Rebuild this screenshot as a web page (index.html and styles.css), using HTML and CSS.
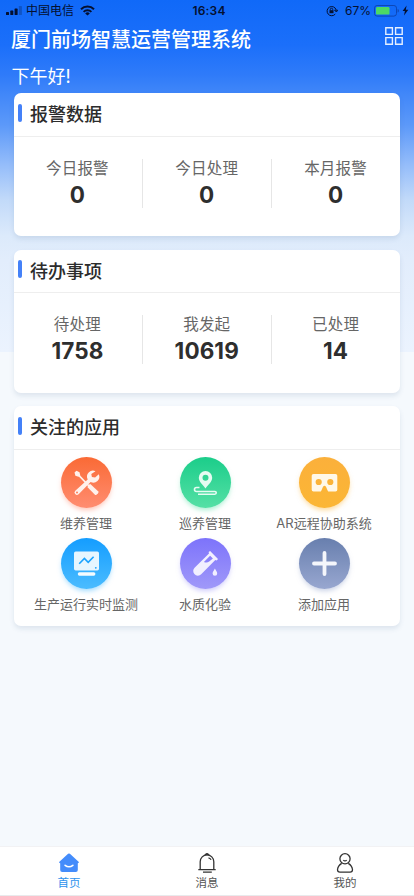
FILE: index.html
```html
<!DOCTYPE html>
<html lang="zh-CN">
<head>
<meta charset="utf-8">
<meta name="viewport" content="width=device-width, initial-scale=1">
<title>厦门前场智慧运营管理系统</title>
<link rel="stylesheet" href="styles.css">
</head>
<body>
<div class="status">
  <div class="status-left">
    <svg class="signal" width="16" height="10" viewBox="0 0 16 10"><rect x="0" y="6" width="3" height="3" rx=".6"/><rect x="4.3" y="4.6" width="3" height="4.4" rx=".6"/><rect x="8.6" y="2.6" width="3" height="6.4" rx=".6"/><rect x="12.9" y="0" width="3" height="9" rx=".6" opacity=".25"/></svg>
    <span class="carrier">中国电信</span>
    <svg width="15" height="11" viewBox="0 0 15 11" fill="none" stroke="#041030"><path d="M1 4.2a9.2 9.2 0 0 1 13 0" stroke-width="2"/><path d="M3.6 6.9a5.5 5.5 0 0 1 7.8 0" stroke-width="1.9"/><path d="M7.5 10.6 5.2 8.4a3.3 3.3 0 0 1 4.6 0z" fill="#041030" stroke="none"/></svg>
  </div>
  <span class="time">16:34</span>
  <div class="status-right">
    <svg width="12" height="12" viewBox="0 0 12 12" fill="none" stroke="#041030"><path d="M9.3 9a4.6 4.6 0 1 1 .8-4.2M8.6 5.2h3L10.4 7z" stroke-width="1"/><rect x="3.5" y="5.2" width="4" height="3" fill="#041030" stroke="none"/><path d="M4.3 5.2V4.4a1.2 1.2 0 0 1 2.4 0v.8" stroke-width=".9"/></svg>
    <span class="percent">67%</span>
    <svg width="25" height="12" viewBox="0 0 25 12"><rect x=".5" y=".5" width="22" height="10.6" rx="2.6" fill="none" stroke="#0d47b5"/><rect x="2" y="2" width="13.5" height="7.6" rx="1.2" fill="#4cd964"/><path d="M23.6 4q1.3.3 1.3 1.8t-1.3 1.8z" fill="#0d47b5"/></svg>
    <svg class="bolt" width="7" height="11" viewBox="0 0 7 11"><path d="M4.6.4.6 6h2.3L2 10.6 6.3 4.7H3.8z"/></svg>
  </div>
</div>
<header class="header">
  <h1>厦门前场智慧运营管理系统</h1>
  <svg width="18" height="18" viewBox="0 0 18 18" fill="none" stroke="#e4efff" stroke-width="1.4"><path d="M.8.8h6.6v6.6H.8zM10.6.8h6.6v6.6h-6.6zM.8 10.6h6.6v6.6H.8zM10.6 10.6h6.6v6.6h-6.6z"/></svg>
</header>
<p class="greeting">下午好!</p>
<main>
  <section class="card">
    <h2>报警数据</h2>
    <div class="stats">
      <div class="stat"><span>今日报警</span><b>0</b></div>
      <div class="stat"><span>今日处理</span><b>0</b></div>
      <div class="stat"><span>本月报警</span><b>0</b></div>
    </div>
  </section>
  <section class="card">
    <h2>待办事项</h2>
    <div class="stats">
      <div class="stat"><span>待处理</span><b>1758</b></div>
      <div class="stat"><span>我发起</span><b>10619</b></div>
      <div class="stat"><span>已处理</span><b>14</b></div>
    </div>
  </section>
  <section class="card card-apps">
    <h2>关注的应用</h2>
    <div class="apps">
      <div class="app">
        <div class="icon orange"><svg viewBox="0 0 51 51"><path d="M17.5 18 28 29" stroke="#fff1ec" stroke-width="1.8"/><path d="m13.5 15.5 2-1.7 3 1.4.8 3.4-1.8 1.2-3.1-1z" fill="#fff1ec"/><path d="m29 26.8 8.1 7.4q1 1-.1 2.1l-1.3 1.3q-1 1-2 0l-7.4-7.6z" fill="#fff1ec"/><path d="M34.5 14.2a6 6 0 0 0-7.8 8.2L14.3 33.7a2.4 2.4 0 0 0 3.3 3.5l12-12.1a6 6 0 0 0 8.2-7.8l-3.7 3.2-3.2-.6-.6-2.8z" fill="#fff1ec"/><circle cx="16" cy="35.5" r="1" fill="#ff7e58"/></svg></div>
        <span>维养管理</span>
      </div>
      <div class="app">
        <div class="icon green"><svg viewBox="0 0 51 51"><path fill-rule="evenodd" d="M25.5 14a6.7 6.7 0 0 0-6.7 6.7c0 4.4 4.7 7.3 6.7 10.7 2-3.4 6.7-6.3 6.7-10.7a6.7 6.7 0 0 0-6.7-6.7zm0 3.8a3 3 0 1 1 0 6 3 3 0 0 1 0-6z" fill="#e6fbf2"/><path d="M19.5 30.5h-3a2 2 0 0 0 0 4h18.4a1 1 0 0 1 0 2.7H18" fill="none" stroke="#e6fbf2" stroke-width="1.6"/></svg></div>
        <span>巡养管理</span>
      </div>
      <div class="app">
        <div class="icon yellow"><svg viewBox="0 0 51 51"><path fill-rule="evenodd" d="M14.5 17h22q1.8 0 1.8 1.8v14q0 1.8-1.8 1.8h-6.4q-1 0-1.5-1.2l-1.6-3.7q-1.5-2-3 0l-1.6 3.7q-.5 1.2-1.5 1.2h-6.4q-1.8 0-1.8-1.8v-14q0-1.8 1.8-1.8zm5.2 4.9a3.1 3.1 0 1 0 0 6.2 3.1 3.1 0 0 0 0-6.2zm11.6 0a3.1 3.1 0 1 0 0 6.2 3.1 3.1 0 0 0 0-6.2z" fill="#fff8e8"/></svg></div>
        <span>AR远程协助系统</span>
      </div>
      <div class="app">
        <div class="icon blue"><svg viewBox="0 0 51 51"><rect x="13" y="13.5" width="25" height="19" rx="1.7" fill="#e6f6ff"/><path d="m18.2 25.8 5.2-5.3 3.8 3.8 5.4-5.5" fill="none" stroke="#1aa3ff" stroke-width="1.6"/><circle cx="34.8" cy="29.8" r=".9" fill="#1aa3ff"/><rect x="16.8" y="34.2" width="17.6" height="3.5" rx="1.6" fill="#f4fbff"/></svg></div>
        <span>生产运行实时监测</span>
      </div>
      <div class="app">
        <div class="icon purple"><svg viewBox="0 0 51 51"><path fill-rule="evenodd" d="m28.6 14 1.5-1 7.9 8-1.3 1.4-1.4-.3-14.1 14.2a4.6 4.6 0 0 1-6.8-.3 4.4 4.4 0 0 1 .2-6.2l14.4-14.3zm1.5 3.8-6.2 6.2q3 1.3 5.3-.4l3.7-3.1z" fill="#f1efff"/><path d="M34.9 30.4c1.1 2 2.3 3.4 2.3 5a2.3 2.3 0 0 1-4.6 0c0-1.6 1.2-3 2.3-5z" fill="#f1efff"/></svg></div>
        <span>水质化验</span>
      </div>
      <div class="app">
        <div class="icon slate"><svg viewBox="0 0 51 51"><path d="M25.5 15v21M15 25.5h21" stroke="#f4f6fb" stroke-width="3.8" stroke-linecap="round"/></svg></div>
        <span>添加应用</span>
      </div>
    </div>
  </section>
</main>
<nav class="tabs">
  <div class="tab active">
    <svg width="22" height="20" viewBox="0 0 22 20"><path d="M10.1.8q.9-.7 1.8 0l8.7 8q1 1.3-.8 1.5V17q0 2-2 2H4.2q-2 0-2-2v-6.7q-1.8-.2-.8-1.5z" fill="#448cfb"/><path d="M7.1 12.3q3.9 3 7.8 0" fill="none" stroke="#fff" stroke-width="1.6" stroke-linecap="round"/></svg>
    <span>首页</span>
  </div>
  <div class="tab">
    <svg width="22" height="20" viewBox="0 0 22 20" fill="none" stroke="#333" stroke-width="1.3"><path d="M4.2 16.2V8.7a6.8 6.8 0 0 1 13.6 0v7.5M2.3 16.6h17.4M7 19.1h8.8M12.5 4.8q1.9.5 2.6 2"/><path d="M9.6 1.5q1.4-1.7 2.8 0z" fill="#333"/></svg>
    <span>消息</span>
  </div>
  <div class="tab">
    <svg width="22" height="20" viewBox="0 0 22 20" fill="none" stroke="#333" stroke-width="1.3"><circle cx="11" cy="5.8" r="5.1"/><path d="M9.3 7.1q1.7 1.6 3.4 0M7.7 10.4q-3.8 2.3-4.2 6.4 0 2.4 2.4 2.4h10.2q2.4 0 2.4-2.4-.4-4.1-4.2-6.4"/></svg>
    <span>我的</span>
  </div>
</nav>
</body>
</html>
```
FILE: styles.css
```css
* { box-sizing: border-box; margin: 0; padding: 0; }
body {
  width: 414px;
  height: 896px;
  overflow: hidden;
  display: flex;
  flex-direction: column;
  font-family: Inter, "Noto Sans CJK SC", sans-serif;
  color: #333;
  background: linear-gradient(180deg, #1069f8 0, #1b6ffa 45px, #2f7bf9 75px, #4187f9 94px, #5c99f9 125px, #95bdfa 165px, #c2daf9 200px, #dceafb 236px, #e2edfc 260px, #ebf3fe 352px, #f5f9fd 352px, #f5f9fd 100%);
}
svg { display: block; flex: none; }
.status {
  height: 21px;
  padding: 0 5px 0 6px;
  display: grid;
  grid-template-columns: 1fr auto 1fr;
  align-items: center;
  font-size: 12px;
  line-height: 21px;
  color: #041030;
}
.status-left, .status-right { display: flex; align-items: center; }
.status-right { justify-content: flex-end; }
.signal { fill: #041030; }
.carrier { margin: 0 6px 0 4px; }
.time { font-weight: 600; font-size: 12px; letter-spacing: .2px; padding-left: 3px; }
.percent { margin: 0 3px 0 7px; }
.bolt { margin-left: 3px; fill: #041030; }
.header {
  height: 36px;
  padding: 0 11px 0 11px;
  display: flex;
  align-items: center;
  justify-content: space-between;
}
.header svg { margin-top: -6px; }
h1 { font-size: 20px; line-height: 36px; font-weight: 500; color: #fff; padding-top: 2px; }
.greeting { height: 36px; padding: 2px 0 0 11.5px; font-size: 18px; line-height: 36px; color: #fff; font-weight: 400; }
main { padding: 0 14px 0 13.5px; flex: 1; display: flex; flex-direction: column; gap: 13.5px; }
.card {
  height: 143px;
  background: #fff;
  border-radius: 7px;
  box-shadow: 0 3px 5px rgba(60, 90, 130, .12);
}
.card-apps { height: 220px; }
h2 {
  height: 43.5px;
  padding-left: 4.5px;
  display: flex;
  align-items: center;
  border-bottom: 1.5px solid #eee;
  font-size: 18px;
  font-weight: 500;
  line-height: 42px;
  padding-top: 2px;
  color: #2c2c2c;
}
h2::before {
  content: "";
  width: 3.5px;
  height: 18px;
  margin: -5px 8.5px 0 0;
  border-radius: 2px;
  background: #4481f8;
}
.stats { display: grid; grid-template-columns: repeat(3, 1fr); padding-top: 22px; }
.stat { height: 49px; display: flex; flex-direction: column; align-items: center; }
.stat + .stat { border-left: 1px solid #e6e6e6; }
.stat span { font-size: 15.5px; line-height: 19px; height: 24px; color: #666; letter-spacing: .2px; margin-left: -1px; }
.stat b { font-size: 22.5px; line-height: 24px; font-weight: 700; color: #2e2e2e; letter-spacing: .1px; margin-left: -1px; }
.apps { display: grid; grid-template-columns: repeat(3, 119px); grid-auto-rows: 81px; padding: 7px 0 0 13px; }
.app { display: flex; flex-direction: column; align-items: center; }
.app span { margin-top: 6px; font-size: 13px; line-height: 19px; color: #666; white-space: nowrap; }
.icon { width: 51px; height: 51px; border-radius: 50%; }
.icon svg { width: 51px; height: 51px; }
.orange { background: linear-gradient(#fa6a35, #ff8d71); box-shadow: 0 3px 5px -1px #ff8d7180; }
.green { background: linear-gradient(#1bcd8a, #55e0a5); box-shadow: 0 3px 5px -1px #55e0a580; }
.yellow { background: linear-gradient(#fbb03b, #fbb635); box-shadow: 0 3px 5px -1px #fbb63580; }
.blue { background: linear-gradient(#149dff, #4bbcff); box-shadow: 0 3px 5px -1px #4bbcff80; }
.purple { background: linear-gradient(#7d73fb, #a099f9); box-shadow: 0 3px 5px -1px #a099f980; }
.slate { background: linear-gradient(#687fae, #98a7d0); box-shadow: 0 3px 5px -1px #98a7d080; }
.tabs {
  height: 50px;
  display: grid;
  grid-template-columns: repeat(3, 1fr);
  background: #fff;
  border-top: 1px solid #f2f2f4;
  border-bottom: 1px solid #e9eaec;
}
.tab { display: flex; flex-direction: column; align-items: center; padding-top: 6px; }
.tab span { font-size: 11.5px; line-height: 18px; margin-top: 1px; color: #555; }
.active span { color: #2e92ed; }
```
